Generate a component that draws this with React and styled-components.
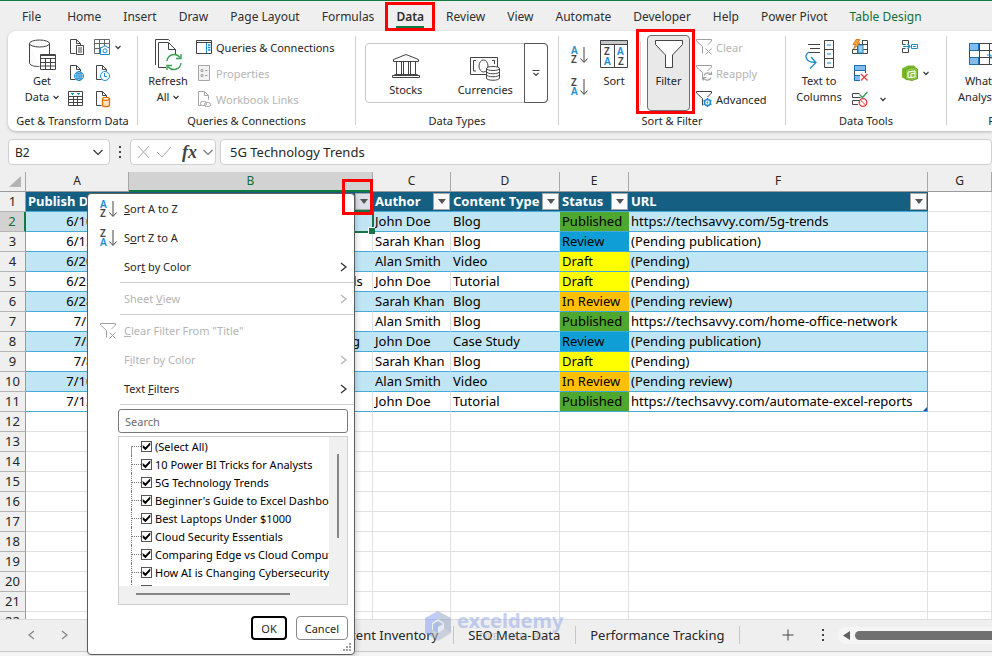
import { useState } from "react";
import styled, { createGlobalStyle, css } from "styled-components";

const GlobalStyle = createGlobalStyle`
  * {
    box-sizing: border-box;
  }
  body {
    margin: 0;
    background: #efefef;
    color: #262626;
    font-family: "Noto Sans", "Open Sans", sans-serif;
    font-size: 12px;
  }
  button, input {
    font: inherit;
    color: inherit;
    margin: 0;
    padding: 0;
  }
  button {
    background: transparent;
    border: none;
  }
  svg {
    display: block;
    flex: none;
    overflow: visible;
  }
`;

const Page = styled.div`
  display: flex;
  flex-direction: column;
  height: 100vh;
  overflow: hidden;
  border-top: 1px solid #107c41;
`;

/* ---------- ribbon tabs ---------- */

const TabBar = styled.nav`
  display: flex;
  gap: 22px;
  height: 30px;
  flex: none;
  padding: 0 22px;
`;

const Tab = styled.button`
  position: relative;
  padding-top: 2px;
  line-height: 28px;
  white-space: nowrap;
  color: ${(p) => (p.$accent ? "#0f703b" : "#303030")};
  &:first-child {
    margin-right: 4px;
  }
  ${(p) =>
    p.$active &&
    css`
      font-weight: 600;
      &::before {
        content: "";
        position: absolute;
        left: 0;
        right: 0;
        bottom: 3px;
        height: 2px;
        background: #107c41;
      }
    `}
`;

/* red frame drawn over a control */
const Highlight = styled.span`
  position: absolute;
  inset: ${(p) => p.$inset};
  border: 3px solid #fe0000;
  pointer-events: none;
  z-index: 5;
`;

/* ---------- ribbon ---------- */

const Ribbon = styled.div`
  display: flex;
  flex: none;
  height: 100px;
  margin-left: 8px;
  background: #fff;
  border-radius: 8px 0 0 8px;
  box-shadow: 0 1px 3px rgba(0, 0, 0, 0.25);
  font-size: 11px;
`;

const Group = styled.section`
  display: flex;
  flex-direction: column;
  flex: 0 0 ${(p) => p.$width}px;
`;

const GroupBody = styled.div`
  display: flex;
  height: 81px;
  padding-left: ${(p) => p.$pad}px;
`;

const GroupLabel = styled.div`
  line-height: 18px;
  text-align: center;
  white-space: nowrap;
`;

const Divider = styled.div`
  flex: 0 0 1px;
  margin: 5px 0 6px;
  background: #d1d1d1;
`;

const InnerDivider = styled(Divider)`
  margin: 11px 6px 7px 7px;
`;

const BigButton = styled.button`
  position: relative;
  display: flex;
  flex-direction: column;
  align-items: center;
  flex: 0 0 ${(p) => p.$width}px;
  padding-top: 8px;
  line-height: 16px;
  white-space: nowrap;
  svg + span {
    margin-top: 2px;
  }
`;

const PressedButton = styled(BigButton)`
  margin-top: 4px;
  padding-top: 3px;
  height: 76px;
  background: #e9e9e9;
  border: 1px solid #6e6e6e;
  border-radius: 4px;
`;

const WithArrow = styled.span`
  display: flex;
  align-items: center;
  gap: 4px;
`;

const IconGrid = styled.div`
  display: grid;
  grid-template-columns: ${(p) => p.$columns};
  grid-auto-rows: 26px;
  padding-top: 3px;
  margin-left: ${(p) => p.$gap}px;
`;

const IconButton = styled.button`
  display: flex;
  align-items: center;
  gap: ${(p) => p.$gap || 5}px;
`;

const CommandList = styled.div`
  display: grid;
  grid-auto-rows: 26px;
  padding-top: 3px;
  margin-left: ${(p) => p.$gap}px;
`;

const Command = styled.button`
  display: flex;
  align-items: center;
  gap: 4px;
  white-space: nowrap;
  &:disabled {
    color: #b4b4b4;
  }
`;

const Gallery = styled.div`
  display: flex;
  flex: 1;
  height: 60px;
  margin: 12px 10px 0 0;
  border: 1px solid #c8c8c8;
  border-radius: 4px;
`;

const Tile = styled.button`
  display: flex;
  flex: 1;
  flex-direction: column;
  align-items: center;
  padding-top: 8px;
  line-height: 16px;
  svg {
    margin-bottom: 2px;
  }
`;

const MoreButton = styled.button`
  display: grid;
  place-items: center;
  flex: 0 0 24px;
  margin: -1px;
  border: 1px solid #555;
  border-radius: 0 4px 4px 0;
`;

const SortStack = styled.div`
  display: grid;
  grid-auto-rows: 32px;
  align-items: center;
  padding-top: 8px;
  margin-right: 6px;
`;

/* ---------- formula bar ---------- */

const FormulaBar = styled.div`
  display: flex;
  align-items: center;
  flex: none;
  gap: 4px;
  padding: 8px 0 7px 8px;
`;

const Box = styled.div`
  display: flex;
  align-items: center;
  height: 26px;
  background: #fff;
  border: 1px solid #d0d0d0;
  border-radius: 4px;
  flex: ${(p) => p.$flex};
  padding: ${(p) => p.$padding || "0 6px"};
  justify-content: space-between;
`;

const BarInput = styled.input`
  width: 100%;
  min-width: 0;
  border: none;
  outline: none;
  background: transparent;
  font-size: ${(p) => p.$size || 13}px;
`;

const Dots = styled.div`
  display: grid;
  justify-content: center;
  align-content: center;
  gap: 3px;
  flex: 0 0 ${(p) => p.$width}px;
  i {
    width: 2px;
    height: 2px;
    background: #444;
  }
`;

const Fx = styled.span`
  padding-left: 4px;
  font: italic bold 18px "Liberation Serif", serif;
  color: #444;
`;

/* ---------- sheet ---------- */

const Workbook = styled.main`
  position: relative;
  display: flex;
  flex-direction: column;
  flex: 1;
  min-height: 0;
`;

const SheetArea = styled.div`
  flex: 1;
  min-height: 0;
  overflow: hidden;
  background: #fff;
`;

const Sheet = styled.table`
  width: 100%;
  table-layout: fixed;
  border-collapse: separate;
  border-spacing: 0;
  font-size: 13px;
  color: #000;
  th, td {
    height: 20px;
    padding: 0 2px;
    line-height: 18px;
    vertical-align: top;
    white-space: nowrap;
  }
`;

const ColHead = styled.th`
  font-weight: 400;
  font-size: 12px;
  text-align: center;
  background: ${(p) => (p.$selected ? "#d2d2d2" : "#efefef")};
  color: ${(p) => (p.$selected ? "#0f703b" : "#262626")};
  border-right: 1px solid #a8a8a8;
  border-bottom: ${(p) => (p.$selected ? "2px solid #107c41" : "1px solid #9b9b9b")};
`;

const Corner = styled(ColHead)`
  svg {
    margin: 4px 0 0 7px;
  }
`;

const RowHead = styled.th`
  font-weight: 400;
  text-align: center;
  background: ${(p) => (p.$selected ? "#d2d2d2" : "#efefef")};
  color: ${(p) => (p.$selected ? "#0f703b" : "#262626")};
  border-right: ${(p) => (p.$selected ? "2px solid #107c41" : "1px solid #9b9b9b")};
  border-bottom: 1px solid #b4b4b4;
`;

const EmptyCell = styled.td`
  border-right: 1px solid #e1e1e1;
  border-bottom: 1px solid #e1e1e1;
`;

const TitleCell = styled.th`
  background: #156082;
  color: #fff;
  font-weight: 700;
  text-align: left;
  border-bottom: 1px solid #45a9d9;
  && {
    padding-right: 1px;
  }
`;

const TitleInner = styled.div`
  position: relative;
  display: flex;
  align-items: center;
  justify-content: space-between;
  height: 18px;
`;

const FilterButton = styled.button`
  display: grid;
  place-items: center;
  flex: 0 0 17px;
  height: 17px;
  background: ${(p) => (p.$open ? "#dde0e8" : "#fbfbfd")};
  border: 1px solid #a6a6a6;
`;

const statusColors = {
  Published: "#4ea72e",
  Review: "#0f9ed5",
  Draft: "#ffff00",
  "In Review": "#ffc000",
};

const DataCell = styled.td`
  position: relative;
  background: ${(p) => p.$fill || (p.$striped ? "#c0e6f5" : "#fff")};
  text-align: ${(p) => p.$align || "left"};
  border-bottom: 1px solid #45a9d9;
  border-right: 1px solid
    ${(p) => (p.$last ? "#45a9d9" : p.$fill || (p.$striped ? "#c0e6f5" : "#e1e1e1"))};
  && {
    padding-right: 0;
  }
`;

const Selection = styled.span`
  position: absolute;
  z-index: 1;
  inset: -2px -2px -2px -1px;
  border: 2px solid #1a7346;
  &::after {
    content: "";
    position: absolute;
    right: -3px;
    bottom: -3px;
    width: 6px;
    height: 6px;
    background: #1a7346;
    border: 1px solid #fff;
    border-width: 1px 0 0 1px;
  }
`;

const TableCorner = styled.span`
  position: absolute;
  right: 0;
  bottom: 0;
  border: 2px solid #2f4f9f;
  border-top-color: transparent;
  border-left-color: transparent;
`;

/* ---------- sheet tabs ---------- */

const SheetBar = styled.div`
  display: flex;
  align-items: center;
  flex: none;
  height: 33px;
  padding-bottom: 1px;
  background: #efefef;
  border-top: 1px solid #dcdcdc;
  border-bottom: 1px solid #c8c8c8;
`;

const SheetNav = styled.div`
  display: flex;
  align-items: center;
  gap: 23px;
  flex: 0 0 313px;
  padding-left: 27px;
`;

const SheetTab = styled.button`
  padding: 0 15px 0 14px;
  line-height: 18px;
  font-size: 13px;
  white-space: nowrap;
  border-right: 1px solid #c6c6c6;
`;

const AddSheet = styled.button`
  margin: 0 26px 0 42px;
`;

const ScrollTrack = styled.div`
  display: flex;
  align-items: center;
  flex: 1;
  gap: 5px;
  height: 17px;
  margin-left: 12px;
  padding-left: 5px;
  background: #f5f5f5;
  border-radius: 8px 0 0 8px;
`;

const ScrollThumb = styled.div`
  flex: 1;
  height: 9px;
  background: #707070;
  border-radius: 5px 0 0 5px;
`;

const StatusBar = styled.div`
  flex: 0 0 4px;
  background: #f4f4f4;
`;

const Watermark = styled.div`
  position: absolute;
  left: 424px;
  bottom: 14px;
  display: flex;
  gap: 5px;
  opacity: 0.5;
  pointer-events: none;
`;

const WatermarkText = styled.div`
  font-size: 20px;
  line-height: 22px;
  font-weight: 700;
  color: #8fa6e8;
  small {
    display: block;
    font-size: 8px;
    line-height: 10px;
    text-align: center;
    color: #8a8a8a;
    font-weight: 400;
  }
`;

/* ---------- filter menu ---------- */

const Menu = styled.div`
  position: absolute;
  left: 87px;
  top: 21px;
  width: 268px;
  padding-bottom: 14px;
  background: #fff;
  border: 1px solid #5c5c5c;
  border-radius: 4px;
  box-shadow: 2px 2px 5px rgba(0, 0, 0, 0.15);
  font-size: 11px;
  z-index: 2;
`;

const MenuItem = styled.button`
  display: grid;
  grid-template-columns: 24px 1fr 14px;
  align-items: center;
  width: 100%;
  height: 29px;
  padding: 0 0 0 12px;
  text-align: left;
  &:disabled {
    color: #b4b4b4;
  }
  > svg:last-child {
    margin-left: -1px;
  }
`;

const MenuRule = styled.div`
  height: 1px;
  margin: 1px 0 1px 32px;
  background: #d0d0d0;
`;

const MenuBody = styled.div`
  padding: 3px 6px 0 30px;
`;

const SearchInput = styled.input`
  display: block;
  width: 100%;
  height: 24px;
  padding: 0 6px;
  border: 1px solid #7a7a7a;
  border-radius: 3px;
  outline: none;
  &::placeholder {
    color: #6a6a6a;
  }
`;

const ListFrame = styled.div`
  display: grid;
  grid-template-columns: 1fr 18px;
  grid-template-rows: 149px 18px;
  margin-top: 3px;
  background: #f0f0f0;
  border: 1px solid #cfcfcf;
`;

const CheckList = styled.div`
  position: relative;
  overflow: hidden;
  padding-left: 12px;
  background: #fff;
  color: #000;
`;

const CheckRow = styled.label`
  display: flex;
  align-items: center;
  height: 18px;
  white-space: nowrap;
  background: linear-gradient(90deg, #777 50%, transparent 50%) 0 9px / 2px 1px repeat-x;
  border-left: 1px dotted #777;
  &:first-child {
    border-image: linear-gradient(transparent 50%, #999 50%) 1;
  }
  span {
    padding-left: 3px;
    background: #fff;
    flex: 1;
  }
`;

const Checkbox = styled.input`
  appearance: none;
  flex: none;
  width: 11px;
  height: 11px;
  margin-left: 9px;
  background: #fff;
  border: 1px solid #555;
  &:checked::before {
    content: "";
    display: block;
    width: 9px;
    height: 9px;
    background: #000;
    clip-path: polygon(8% 40%, 38% 64%, 92% 8%, 92% 40%, 38% 96%, 8% 70%);
  }
`;

const VThumb = styled.div`
  width: 2px;
  height: 84px;
  margin: 17px 0 0 8px;
  background: #868686;
`;

const HThumb = styled.div`
  width: 154px;
  height: 2px;
  margin: 7px 0 0 17px;
  background: #868686;
`;

const MenuFooter = styled.div`
  display: flex;
  justify-content: flex-end;
  gap: 9px;
  margin-top: 11px;
`;

const DialogButton = styled.button`
  height: 24px;
  padding: 0 8px;
  background: #fff;
  border: ${(p) => (p.$primary ? "2px solid #000" : "1px solid #8a8a8a")};
  border-radius: 4px;
`;

const Grip = styled.svg`
  position: absolute;
  right: 1px;
  bottom: 1px;
`;

/* ---------- icons ---------- */

const DARK = "#444";
const BLUE = "#1e8bcd";

const Svg = ({ w = 16, h = 16, children, ...rest }) => (
  <svg width={w} height={h} viewBox={`0 0 ${w} ${h}`} fill="none" stroke={DARK} {...rest}>
    {children}
  </svg>
);

const Down = ({ size = 6, color = "#333" }) => (
  <Svg w={size} h={size} stroke={color} strokeWidth="1.2">
    <path d={`M.5 ${size * 0.3}L${size / 2} ${size * 0.75}L${size - 0.5} ${size * 0.3}`} />
  </Svg>
);

const Chevron = ({ left, color = "#333", size = 10 }) => (
  <Svg w={size} h={size} stroke={color} strokeWidth="1.3">
    <path d={left ? "M7 1L2 5L7 9" : "M2 1L7 5L2 9"} />
  </Svg>
);

const DatabaseIcon = () => (
  <Svg w={28} h={32}>
    <path d="M1.500 4.500V24c0 2 4 3.500 9 3.500h1M21.500 4.500V15" fill="#fafafa" />
    <ellipse cx="11.500" cy="4.500" rx="10" ry="3.500" fill="#fafafa" />
    <path d="M12.500 15.500h15v15h-15z" fill="#fff" />
    <path d="M12.500 16.500h15M12.500 19.500h15M12.500 23.500h15M12.500 27h15M17.500 19v11M22.500 19v11" />
  </Svg>
);

const docPath = "M7.500 14.500h-5V.500h6l4 4v2M8.500.500v4h4";

const DocTextIcon = () => (
  <Svg>
    <path d={docPath} />
    <path d="M8.500 6.500h7v9h-7z" fill="#fff" />
    <path d="M10 9h4M10 11h4M10 13h4" />
  </Svg>
);

const DocGlobeIcon = () => (
  <Svg>
    <path d={docPath} />
    <circle cx="11" cy="11" r="4.500" fill="#fff" stroke={BLUE} />
    <path d="M6.500 11h9M11 6.500v9M7.500 8.800h7M7.500 13.200h7" stroke={BLUE} />
    <ellipse cx="11" cy="11" rx="2.200" ry="4.500" stroke={BLUE} />
  </Svg>
);

const DocClockIcon = () => (
  <Svg>
    <path d={docPath} />
    <circle cx="11" cy="11" r="4.500" fill="#fff" stroke={BLUE} />
    <path d="M10.500 8v3.500H13" stroke={BLUE} />
  </Svg>
);

const DocOrangeIcon = () => (
  <Svg>
    <path d={docPath} />
    <path d="M8.500 8v6.500c0 1.500 7 1.500 7 0V8" fill="#fbe3c8" stroke="#e07000" strokeWidth="1.300" />
    <ellipse cx="12" cy="7.800" rx="3.500" ry="1.500" fill="#fff" stroke="#e07000" strokeWidth="1.300" />
  </Svg>
);

const TableCameraIcon = () => (
  <Svg>
    <path d="M.500.500h15v14H.500zM.500 4.500h15M.500 9.500h15M5.500.500v14M10.500.500v14" stroke="#666" />
    <path d="M6.500 8.500h2l1-1.500h3l1 1.500h2v7h-9z" fill="#fff" stroke={BLUE} />
    <circle cx="11" cy="11.800" r="2" stroke={BLUE} />
  </Svg>
);

const TableIcon = () => (
  <Svg>
    <path d="M.500.500h14v14H.500zM.500 5.500h14M.500 8.500h14M.500 11.500h14M5.500 5v10M9.500 5v10" />
    <path d="M3 2.500h3M9 2.500h3M4.500 2.500v1.500M10.500 2.500v1.500" stroke={BLUE} />
  </Svg>
);

const RefreshIcon = () => (
  <Svg w={28} h={32}>
    <path d="M12 28.500H4.500v-25h10l7 7V16M14.500 3.500v7h7" fill="#fafafa" />
    <path d="M1.500 26V.500h13l1.500 1.500" />
    <g stroke="#38a052" strokeWidth="1.400">
      <path d="M13 22a7.200 7.200 0 0 1 13-3.500M27 24a7.200 7.200 0 0 1-13 3.500" />
      <path d="M27 15v4.500h-5M13 31v-4.500h5" />
    </g>
  </Svg>
);

const QueriesIcon = () => (
  <Svg>
    <path d="M.500 1.500h15v13H.500zM.500 3.500h15" />
    <path d="M12 6h2.500M12 8.500h2.500M12 11h2.500" stroke={BLUE} strokeWidth="1.300" />
    <path d="M10.500 4v10" stroke={BLUE} />
  </Svg>
);

const PropertiesIcon = () => (
  <Svg stroke="#a6a6a6">
    <path d="M2.500.500h11v15h-11z" fill="#f2f2f2" />
    <path d="M5 4.500h2v2H5zM5 9.500h2v2H5zM9 5.500h2.500M9 10.500h2.500" />
  </Svg>
);

const LinksIcon = () => (
  <Svg stroke="#a6a6a6">
    <path d="M5 14.500H2.500V.500h6l4 4v4M8.500.500v4h4" />
    <rect x="4.500" y="10.500" width="6" height="4" rx="2" />
    <rect x="8.500" y="11.500" width="6" height="4" rx="2" />
  </Svg>
);

const StocksIcon = () => (
  <Svg w={30} h={28}>
    <path d="M2.500 9.500v-2L15 2.500l12.500 5v2z" fill="#fafafa" />
    <path d="M5.500 10v13M10.500 10v13M12.500 10v13M17.500 10v13M19.500 10v13M24.500 10v13M3.500 22.500h23M1.500 25.500h27v-2h-27z" />
  </Svg>
);

const CurrenciesIcon = () => (
  <Svg w={32} h={28}>
    <path d="M1.500 5.500h27v17h-27z" fill="#fafafa" />
    <path d="M7 8.500H4.500V19H7M23 8.500h2.500V12" />
    <ellipse cx="14.500" cy="14" rx="4.500" ry="6" fill="#fff" />
    <path d="M17.500 16v10c0 3 13 3 13 0V16" fill="#fff" />
    <ellipse cx="24" cy="16.500" rx="6.500" ry="2" fill="#fff" />
    <path d="M17.500 19.500c0 3 13 3 13 0M17.500 22.500c0 3 13 3 13 0" />
  </Svg>
);

const MoreIcon = () => (
  <Svg w={8} h={8}>
    <path d="M.500 1.500h7M1.500 4L4 6.500L6.500 4" strokeWidth="1.200" />
  </Svg>
);

const Letter = ({ x, y, size, children }) => (
  <text
    x={x}
    y={y}
    fontSize={size}
    fontWeight="600"
    fontFamily="Noto Sans, sans-serif"
    stroke="none"
    fill={children === "A" ? BLUE : DARK}
  >
    {children}
  </text>
);

const SortIcon = ({ top, bottom }) => (
  <Svg w={18} h={20}>
    <Letter x="0" y="9" size="10">{top}</Letter>
    <Letter x="0" y="18" size="10">{bottom}</Letter>
    <path d="M13 2v15M9.500 13.500l3.500 4l3.500-4" />
  </Svg>
);

const SortBigIcon = () => (
  <Svg w={28} h={32}>
    <path d="M.500 1.500h27v27H.500zM14.500 5v23" />
    <path d="M.500 1.500h27v4H.500z" fill="#c8c8c8" />
    <Letter x="4" y="16" size="10">Z</Letter>
    <Letter x="4" y="26" size="10">A</Letter>
    <Letter x="17" y="16" size="10">A</Letter>
    <Letter x="18" y="26" size="10">Z</Letter>
  </Svg>
);

const FunnelBigIcon = () => (
  <Svg w={28} h={32}>
    <path d="M.500 1.500h27v4L17.500 16v12.500h-7V16L.500 5.500z" fill="#fff" />
  </Svg>
);

const funnel = "M6.500 14.500V7.500L.500 2V.500h15V2l-4 4";

const FunnelClearIcon = () => (
  <Svg stroke="#a0a0a0">
    <path d={funnel} />
    <path d="M9.500 9.500l6 6M15.500 9.500l-6 6" />
  </Svg>
);

const FunnelReapplyIcon = () => (
  <Svg stroke="#a0a0a0">
    <path d={funnel} />
    <path d="M8 10.500a4 4 0 0 1 7-1M15 12.500a4 4 0 0 1-7 1M15.500 6.500v3h-3M7.500 15.500v-3h3" strokeWidth="1.200" />
  </Svg>
);

const FunnelGearIcon = () => (
  <Svg>
    <path d={funnel} />
    <circle cx="11.500" cy="11.500" r="3" fill="#fff" stroke={BLUE} strokeWidth="1.400" />
    <circle cx="11.500" cy="11.500" r="1" fill={BLUE} stroke="none" />
    <path d="M11.500 7v2M11.500 14v2M7.500 9.300l1.700 1M13.800 12.700l1.700 1M15.500 9.300l-1.700 1M9.200 12.700l-1.700 1" stroke={BLUE} strokeWidth="1.500" />
  </Svg>
);

const TextColumnsIcon = () => (
  <Svg w={30} h={32}>
    <path d="M4 5.500h12M6 9.500h10M4 13.500h12" />
    <path d="M5 13c-5 3-4 10 6 10.500M7 18l5 5.500L6 29.500" stroke={BLUE} strokeWidth="1.300" />
    <path d="M20.500 1.500h9v27h-9zM20.500 10.500h9M20.500 19.500h9" fill="#fafafa" />
    <path d="M23 6h4M23 15h4M23 24h4" stroke={BLUE} />
  </Svg>
);

const FlashFillIcon = () => (
  <Svg>
    <path d="M5 5.500h10.500v9H.500v-4M.500 10.500h15M5.500 7v8M10.500 1v14M10 1.500h5.500v5" />
    <path d="M6 6h5v8H6z" fill="#9cc9ee" stroke={BLUE} />
    <path d="M4 .500h4L5.500 4H8L1.500 10L3.500 5.500H1z" fill="#f7a23c" stroke="#d8690b" strokeWidth=".8" />
  </Svg>
);

const RemoveDupIcon = () => (
  <Svg>
    <path d="M2.500.500h11v15h-11z" />
    <path d="M2.500.500h11v5h-11zM2.500 10.500h6v5h-6z" fill="#83bdec" stroke="#1a6fb5" />
    <path d="M8 8h8v8H8z" fill="#fff" stroke="none" />
    <path d="M9 9l6.500 6.500M15.500 9L9 15.500" stroke="#e8413c" strokeWidth="1.300" />
  </Svg>
);

const ValidationIcon = () => (
  <Svg>
    <path d="M7.500 2.500h-7v4h8M7 9.500H.500v4H6" />
    <path d="M7.500 3.500l3 3L15.500 1" stroke="#2e9e4f" strokeWidth="1.300" />
    <circle cx="11" cy="11.500" r="3.800" stroke="#e03c3c" strokeWidth="1.300" fill="#fff" />
    <path d="M8.500 9l5 5" stroke="#e03c3c" />
  </Svg>
);

const ConsolidateIcon = () => (
  <Svg>
    <path d="M.500 5.500v-4h6v4M.500 9.500v4h6v-4M.500 5.500h3M.500 9.500h3" />
    <path d="M1 7.500h7M5.500 5L8 7.500L5.500 10" stroke={BLUE} strokeWidth="1.200" />
    <path d="M9.500 5.500h6v4h-6zM11 7.500h3" stroke={BLUE} />
  </Svg>
);

const DataModelIcon = () => (
  <Svg>
    <path d="M0 3.500L6 .500L12 .500L14 2.500L6 5v10.500L0 12.500z" fill="#76b82a" stroke="none" />
    <path d="M3.500 4.500L10 2l5.500 2v9.500L10 15.500l-6.500-1.500z" fill="#8cc63f" stroke="#6aa621" />
    <path d="M6 7l7-1M6 7v5.500M6 12.500h3V8.500h4V6M9 12.500l4-.5V8.500" stroke="#fff" />
  </Svg>
);

const WhatIfIcon = () => (
  <Svg w={30} h={32}>
    <path d="M.500 4.500h29v21H.500zM.500 11.500h29M.500 18.500h29M10.500 4.500v21M20.500 4.500v21" />
    <path d="M.500 4.500h9v7h-9zM.500 18.500h9v7h-9z" fill="#83bdec" stroke="#1a6fb5" />
    <path d="M22 20v-4h-4" stroke={BLUE} />
  </Svg>
);

const Triangle = ({ color = "#555" }) => (
  <Svg w={8} h={5} stroke="none">
    <path d="M0 0h8L4 5z" fill={color} />
  </Svg>
);

/* ---------- data ---------- */

const tabs = [
  "File", "Home", "Insert", "Draw", "Page Layout", "Formulas", "Data", "Review",
  "View", "Automate", "Developer", "Help", "Power Pivot", "Table Design",
];

const columns = [
  { letter: "A", width: 103, title: "Publish Date" },
  { letter: "B", width: 244, title: "Title" },
  { letter: "C", width: 78, title: "Author" },
  { letter: "D", width: 109, title: "Content Type" },
  { letter: "E", width: 69, title: "Status" },
  { letter: "F", width: 299, title: "URL" },
];

const rows = [
  ["6/10/2025", "5G Technology Trends", "John Doe", "Blog", "Published", "https://techsavvy.com/5g-trends"],
  ["6/15/2025", "Cloud Security Essentials", "Sarah Khan", "Blog", "Review", "(Pending publication)"],
  ["6/20/2025", "10 Power BI Tricks for Analysts", "Alan Smith", "Video", "Draft", "(Pending)"],
  ["6/25/2025", "Beginner's Guide to Excel Dashboards", "John Doe", "Tutorial", "Draft", "(Pending)"],
  ["6/28/2025", "Best Laptops Under $1000", "Sarah Khan", "Blog", "In Review", "(Pending review)"],
  ["7/1/2025", "Setting Up a Home Office Network", "Alan Smith", "Blog", "Published", "https://techsavvy.com/home-office-network"],
  ["7/5/2025", "Comparing Edge vs Cloud Computing", "John Doe", "Case Study", "Review", "(Pending publication)"],
  ["7/8/2025", "How AI is Changing Cybersecurity", "Sarah Khan", "Blog", "Draft", "(Pending)"],
  ["7/10/2025", "Top Gadgets This Year", "Alan Smith", "Video", "In Review", "(Pending review)"],
  ["7/12/2025", "How to Automate Excel Reports", "John Doe", "Tutorial", "Published", "https://techsavvy.com/automate-excel-reports"],
];

const filterValues = [
  "(Select All)",
  "10 Power BI Tricks for Analysts",
  "5G Technology Trends",
  "Beginner's Guide to Excel Dashboards",
  "Best Laptops Under $1000",
  "Cloud Security Essentials",
  "Comparing Edge vs Cloud Computing",
  "How AI is Changing Cybersecurity",
  "How to Automate Excel Reports",
];

const emptyRows = Array.from({ length: 40 }, (_, i) => i + 12);

/* ---------- components ---------- */

const RibbonPanel = () => (
  <Ribbon>
    <Group $width={129}>
      <GroupBody $pad={10}>
        <BigButton $width={48}>
          <DatabaseIcon />
          <span>Get</span>
          <WithArrow>Data <Down /></WithArrow>
        </BigButton>
        <IconGrid $columns="26px 36px" $gap={2}>
          <IconButton aria-label="From Text"><DocTextIcon /></IconButton>
          <IconButton aria-label="From Picture"><TableCameraIcon /><Down /></IconButton>
          <IconButton aria-label="From Web"><DocGlobeIcon /></IconButton>
          <IconButton aria-label="Recent Sources"><DocClockIcon /></IconButton>
          <IconButton aria-label="From Table"><TableIcon /></IconButton>
          <IconButton aria-label="Existing Connections"><DocOrangeIcon /></IconButton>
        </IconGrid>
      </GroupBody>
      <GroupLabel>Get &amp; Transform Data</GroupLabel>
    </Group>
    <Divider />
    <Group $width={217}>
      <GroupBody $pad={4}>
        <BigButton $width={52}>
          <RefreshIcon />
          <span>Refresh</span>
          <WithArrow>All <Down /></WithArrow>
        </BigButton>
        <CommandList $gap={2}>
          <Command><QueriesIcon />Queries &amp; Connections</Command>
          <Command disabled><PropertiesIcon />Properties</Command>
          <Command disabled><LinksIcon />Workbook Links</Command>
        </CommandList>
      </GroupBody>
      <GroupLabel>Queries &amp; Connections</GroupLabel>
    </Group>
    <Divider />
    <Group $width={202}>
      <GroupBody $pad={9}>
        <Gallery>
          <Tile><StocksIcon />Stocks</Tile>
          <Tile><CurrenciesIcon />Currencies</Tile>
          <MoreButton aria-label="More data types"><MoreIcon /></MoreButton>
        </Gallery>
      </GroupBody>
      <GroupLabel>Data Types</GroupLabel>
    </Group>
    <Divider />
    <Group $width={226}>
      <GroupBody $pad={12}>
        <SortStack>
          <IconButton aria-label="Sort A to Z"><SortIcon top="A" bottom="Z" /></IconButton>
          <IconButton aria-label="Sort Z to A"><SortIcon top="Z" bottom="A" /></IconButton>
        </SortStack>
        <BigButton $width={38}>
          <SortBigIcon />
          <span>Sort</span>
        </BigButton>
        <InnerDivider />
        <PressedButton $width={43}>
          <FunnelBigIcon />
          <span>Filter</span>
          <Highlight $inset="-7px -6px -4px -12px" />
        </PressedButton>
        <CommandList $gap={6}>
          <Command disabled><FunnelClearIcon />Clear</Command>
          <Command disabled><FunnelReapplyIcon />Reapply</Command>
          <Command><FunnelGearIcon />Advanced</Command>
        </CommandList>
      </GroupBody>
      <GroupLabel>Sort &amp; Filter</GroupLabel>
    </Group>
    <Divider />
    <Group $width={160}>
      <GroupBody $pad={7}>
        <BigButton $width={52}>
          <TextColumnsIcon />
          <span>Text to</span>
          <span>Columns</span>
        </BigButton>
        <IconGrid $columns="50px 36px" $gap={7}>
          <IconButton aria-label="Flash Fill"><FlashFillIcon /></IconButton>
          <IconButton aria-label="Consolidate"><ConsolidateIcon /></IconButton>
          <IconButton aria-label="Remove Duplicates"><RemoveDupIcon /></IconButton>
          <IconButton aria-label="Data Model"><DataModelIcon /><Down /></IconButton>
          <IconButton $gap={12} aria-label="Data Validation"><ValidationIcon /><Down /></IconButton>
        </IconGrid>
      </GroupBody>
      <GroupLabel>Data Tools</GroupLabel>
    </Group>
    <Divider />
    <Group $width={126}>
      <GroupBody $pad={8}>
        <BigButton $width={58}>
          <WhatIfIcon />
          <span>What-If</span>
          <WithArrow>Analysis <Down /></WithArrow>
        </BigButton>
      </GroupBody>
      <GroupLabel>Forecast</GroupLabel>
    </Group>
  </Ribbon>
);

const FilterMenu = () => {
  const [unchecked, setUnchecked] = useState([]);

  const toggle = (value) => {
    setUnchecked((list) =>
      list.includes(value) ? list.filter((v) => v !== value) : [...list, value]
    );
  };

  return (
    <Menu>
      <MenuItem>
        <SortIcon top="A" bottom="Z" />
        <span><u>S</u>ort A to Z</span>
      </MenuItem>
      <MenuItem>
        <SortIcon top="Z" bottom="A" />
        <span>S<u>o</u>rt Z to A</span>
      </MenuItem>
      <MenuItem>
        <i />
        <span>Sor<u>t</u> by Color</span>
        <Chevron />
      </MenuItem>
      <MenuRule />
      <MenuItem disabled>
        <i />
        <span>Sheet <u>V</u>iew</span>
        <Chevron color="#b4b4b4" />
      </MenuItem>
      <MenuRule />
      <MenuItem disabled>
        <FunnelClearIcon />
        <span><u>C</u>lear Filter From "Title"</span>
      </MenuItem>
      <MenuItem disabled>
        <i />
        <span>F<u>i</u>lter by Color</span>
        <Chevron color="#b4b4b4" />
      </MenuItem>
      <MenuItem>
        <i />
        <span>Text <u>F</u>ilters</span>
        <Chevron />
      </MenuItem>
      <MenuRule />
      <MenuBody>
        <SearchInput placeholder="Search" aria-label="Search" />
        <ListFrame>
          <CheckList>
            {filterValues.map((value) => (
              <CheckRow key={value}>
                <Checkbox
                  type="checkbox"
                  checked={!unchecked.includes(value)}
                  onChange={() => toggle(value)}
                />
                <span>{value}</span>
              </CheckRow>
            ))}
          </CheckList>
          <VThumb />
          <HThumb />
        </ListFrame>
        <MenuFooter>
          <DialogButton $primary>OK</DialogButton>
          <DialogButton>Cancel</DialogButton>
        </MenuFooter>
      </MenuBody>
      <Grip width="10" height="10" viewBox="0 0 10 10" fill="#a0a0a0">
        <path d="M6 0h2v2H6zM6 3h2v2H6zM3 3h2v2H3zM6 6h2v2H6zM3 6h2v2H3zM0 6h2v2H0z" />
      </Grip>
    </Menu>
  );
};

const SheetTable = () => (
  <Sheet>
    <colgroup>
      <col width="26" />
      {columns.map((c) => (
        <col key={c.letter} width={c.width} />
      ))}
      <col width="64" />
      <col />
    </colgroup>
    <thead>
      <tr>
        <Corner>
          <Svg w={13} h={12} stroke="none">
            <path d="M12 0v11H0z" fill="#b4b4b4" />
          </Svg>
        </Corner>
        {columns.map((c) => (
          <ColHead key={c.letter} $selected={c.letter === "B"}>{c.letter}</ColHead>
        ))}
        <ColHead>G</ColHead>
        <ColHead />
      </tr>
    </thead>
    <tbody>
      <tr>
        <RowHead>1</RowHead>
        {columns.map((c) => (
          <TitleCell key={c.letter}>
            <TitleInner>
              {c.title}
              <FilterButton $open={c.letter === "B"} aria-label={`Filter ${c.title}`}>
                <Triangle />
              </FilterButton>
              {c.letter === "B" && <Highlight $inset="-13px -1px -5px 211px" />}
            </TitleInner>
          </TitleCell>
        ))}
        <EmptyCell />
        <EmptyCell />
      </tr>
      {rows.map((row, i) => (
        <tr key={row[0]}>
          <RowHead $selected={i === 0}>{i + 2}</RowHead>
          {row.map((value, j) => (
            <DataCell
              key={j}
              $striped={i % 2 === 0}
              $fill={j === 4 ? statusColors[value] : undefined}
              $align={j === 0 ? "right" : "left"}
              $last={j === 5}
            >
              {value}
              {i === 0 && j === 1 && <Selection />}
              {i === rows.length - 1 && j === 5 && <TableCorner />}
            </DataCell>
          ))}
          <EmptyCell />
          <EmptyCell />
        </tr>
      ))}
      {emptyRows.map((n) => (
        <tr key={n}>
          <RowHead>{n}</RowHead>
          {columns.map((c) => (
            <EmptyCell key={c.letter} />
          ))}
          <EmptyCell />
          <EmptyCell />
        </tr>
      ))}
    </tbody>
  </Sheet>
);

const App = () => {
  const [formula, setFormula] = useState("5G Technology Trends");

  return (
    <>
      <GlobalStyle />
      <Page>
        <TabBar>
          {tabs.map((name) => (
            <Tab key={name} $active={name === "Data"} $accent={name === "Table Design"}>
              {name}
              {name === "Data" && <Highlight $inset="1px -11px 0 -11px" />}
            </Tab>
          ))}
        </TabBar>
        <RibbonPanel />
        <FormulaBar>
          <Box $flex="0 0 102px">
            <BarInput $size={12} defaultValue="B2" aria-label="Name box" />
            <Down size={10} />
          </Box>
          <Dots $width={12}><i /><i /><i /></Dots>
          <Box $flex="0 0 86px" $padding="0 2px 0 6px">
            <Svg w={13} h={14} stroke="#aaa"><path d="M1 1l11 12M12 1L1 13" /></Svg>
            <Svg w={16} h={14} stroke="#aaa"><path d="M1 7l5 5L15 2" /></Svg>
            <Fx>fx</Fx>
            <Down size={10} color="#777" />
          </Box>
          <Box $flex="1" $padding="0 9px">
            <BarInput
              value={formula}
              onChange={(e) => setFormula(e.target.value)}
              aria-label="Formula"
            />
          </Box>
        </FormulaBar>
        <Workbook>
          <SheetArea>
            <SheetTable />
          </SheetArea>
          <SheetBar>
            <SheetNav>
              <Chevron left color="#888" />
              <Chevron color="#888" />
            </SheetNav>
            <SheetTab>Content Inventory</SheetTab>
            <SheetTab>SEO Meta-Data</SheetTab>
            <SheetTab>Performance Tracking</SheetTab>
            <AddSheet aria-label="New sheet">
              <Svg w={12} h={12}><path d="M6 .500v11M.500 6h11" /></Svg>
            </AddSheet>
            <Dots $width={6}><i /><i /><i /></Dots>
            <ScrollTrack>
              <Svg w={7} h={9} stroke="none"><path d="M7 0v9L0 4.500z" fill="#606060" /></Svg>
              <ScrollThumb />
            </ScrollTrack>
          </SheetBar>
          <StatusBar />
          <Watermark>
            <Svg w={28} h={32} stroke="none">
              <path d="M14 1L1 8v15l7 4V13l6-4z" fill="#7f9af0" />
              <path d="M14 1l13 7v15l-7-4v-6l-6-4z" fill="#8fa0c0" />
              <path d="M8 20l6-4 6 3 7 4-13 8-6-4z" fill="#a9b4c6" />
              <path d="M14 11l5 3v6l-5 3-5-3v-6z" fill="#6f8fe0" />
              <path d="M14 17l5-3v6l-5 3z" fill="#dfe6f5" />
            </Svg>
            <WatermarkText>
              exceldemy
              <small>EXCEL · DATA · BI</small>
            </WatermarkText>
          </Watermark>
          <FilterMenu />
        </Workbook>
      </Page>
    </>
  );
};

export default App;
